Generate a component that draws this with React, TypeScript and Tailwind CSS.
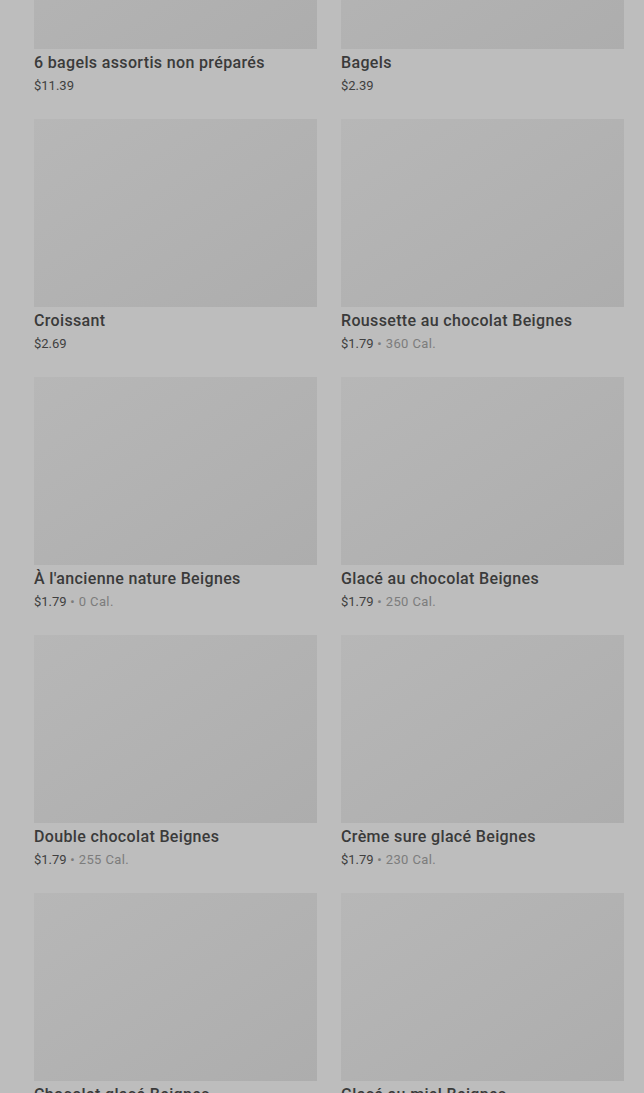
const items = [
  { name: '6 bagels assortis non préparés', price: '$11.39' },
  { name: 'Bagels', price: '$2.39' },
  { name: 'Croissant', price: '$2.69' },
  { name: 'Roussette au chocolat Beignes', price: '$1.79', cal: '360 Cal.' },
  { name: "À l'ancienne nature Beignes", price: '$1.79', cal: '0 Cal.' },
  { name: 'Glacé au chocolat Beignes', price: '$1.79', cal: '250 Cal.' },
  { name: 'Double chocolat Beignes', price: '$1.79', cal: '255 Cal.' },
  { name: 'Crème sure glacé Beignes', price: '$1.79', cal: '230 Cal.' },
  { name: 'Chocolat glacé Beignes', price: '$1.79', cal: '240 Cal.' },
  { name: 'Glacé au miel Beignes', price: '$1.79', cal: '200 Cal.' },
]

function App() {
  return (
    <div className="h-[1093px] overflow-hidden bg-[#bdbdbd] font-['Roboto',sans-serif]">
      <div className="-mt-[139px] grid grid-cols-[283px_283px] gap-x-6 gap-y-[23px] pl-[34px]">
        {items.map((item) => (
          <div key={item.name}>
            <div className="h-[188px] bg-gradient-to-br from-[#b7b7b7] to-[#adadad]" />
            <div className="mt-[4px] text-[16px] leading-5 font-medium tracking-[0.35px] text-[#3a3a3a]">{item.name}</div>
            <div className="mt-[3px] text-[13px] leading-5 text-[#404040]">
              {item.price}
              {item.cal && (
                <span className="tracking-[0.4px] text-[#7c7c7c]"> • {item.cal}</span>
              )}
            </div>
          </div>
        ))}
      </div>
    </div>
  )
}

export default App
